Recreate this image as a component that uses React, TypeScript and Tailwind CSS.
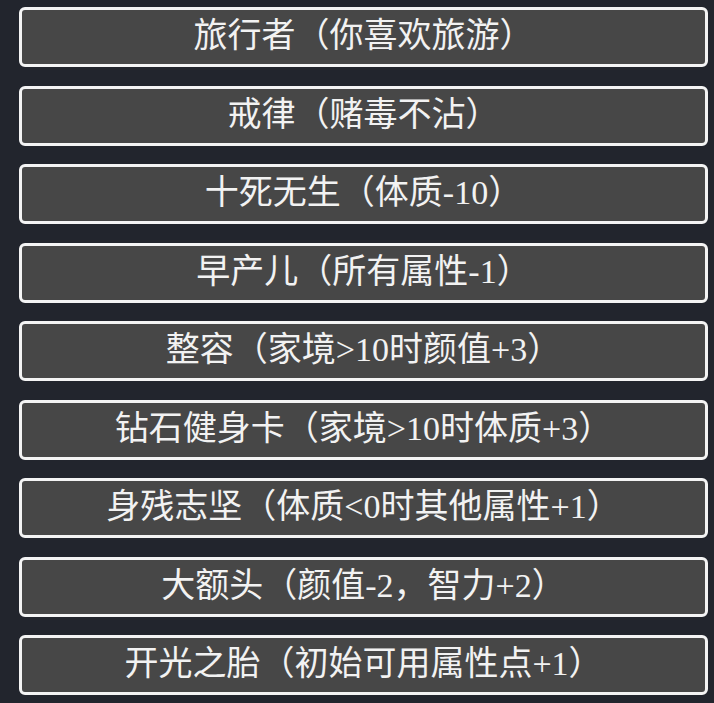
import React from 'react';

const talents = [
  '旅行者（你喜欢旅游）',
  '戒律（赌毒不沾）',
  '十死无生（体质-10）',
  '早产儿（所有属性-1）',
  '整容（家境>10时颜值+3）',
  '钻石健身卡（家境>10时体质+3）',
  '身残志坚（体质<0时其他属性+1）',
  '大额头（颜值-2，智力+2）',
  '开光之胎（初始可用属性点+1）',
];

export default function App() {
  return (
    <div lang="zh-CN" className="min-h-screen bg-[#22252d] pl-[19px] pr-[6px] pt-[7px] pb-2">
      <ul className="flex flex-col gap-[18.5px]">
        {talents.map((t) => (
          <li
            key={t}
            className="flex h-[60px] items-center justify-center rounded-[6px] border-[3px] border-[#f4f4f4] bg-[#474747] pb-[2px] font-['Liberation_Serif','Noto_Sans_CJK_SC',serif] text-[34px] leading-none text-[#f2f2f2]"
          >
            {t}
          </li>
        ))}
      </ul>
    </div>
  );
}
